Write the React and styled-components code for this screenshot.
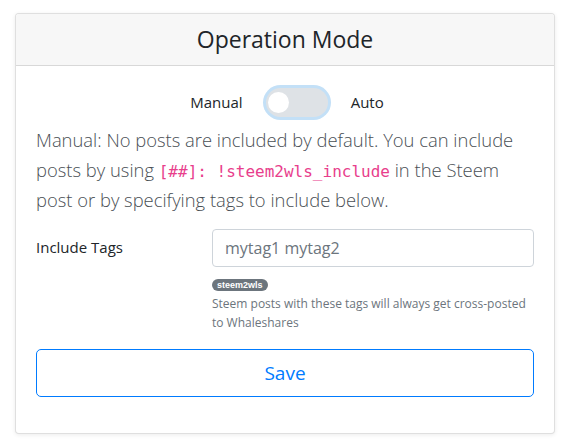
import React from "react";
import styled, { createGlobalStyle } from "styled-components";

const Global = createGlobalStyle`
  html, body { margin: 0; padding: 0; background: #fff; }
  body {
    font-family: "Open Sans", "Noto Sans", "Liberation Sans", sans-serif;
    color: #212529;
    font-size: 16px;
    line-height: 1.5;
  }
  * { box-sizing: border-box; }
`;

const Page = styled.div`
  padding: 13px 18px 7px 15px;
`;

const Card = styled.div`
  border: 1px solid rgba(0, 0, 0, 0.125);
  border-radius: 4px;
  background: #fff;
  box-shadow: 0 1px 4px rgba(0, 0, 0, 0.08);
  overflow: hidden;
`;

const CardHeader = styled.div`
  background: #f7f7f7;
  border-bottom: 1px solid rgba(0, 0, 0, 0.125);
  padding: 12px 20px;
  text-align: center;
`;

const Title = styled.h4`
  margin: 0;
  font-size: 23px;
  font-weight: 400;
  line-height: 27px;
  color: #212529;
`;

const CardBody = styled.div`
  padding: 20px;
`;

const SwitchRow = styled.div`
  display: flex;
  justify-content: center;
  align-items: center;
  gap: 23px;
  height: 32px;
  margin-bottom: 7px;
  font-size: 15px;
  padding-left: 4px;
`;

const Track = styled.span`
  position: relative;
  display: inline-block;
  width: 62px;
  height: 29px;
  border-radius: 15px;
  background: #dee2e6;
  box-shadow: 0 0 0 3px #c3e0f7;
`;

const Knob = styled.span`
  position: absolute;
  top: 4px;
  left: 2px;
  width: 21px;
  height: 21px;
  border-radius: 50%;
  background: #fff;
`;

const Lead = styled.p`
  margin: 0 0 14px;
  font-size: 18.4px;
  font-weight: 300;
  line-height: 30px;
  color: #4a4f55;
`;

const Code = styled.code`
  font-family: "DejaVu Sans Mono", "Liberation Mono", monospace;
  font-size: 16px;
  line-height: 1;
  color: #e83e8c;
`;

const FormRow = styled.div`
  display: grid;
  grid-template-columns: 176px 1fr;
  margin-bottom: 17px;
`;

const Label = styled.label`
  padding-top: 6px;
  font-size: 15px;
  line-height: 24px;
`;

const Field = styled.div`
  display: flex;
  flex-direction: column;
  align-items: flex-start;
`;

const Input = styled.input`
  width: 100%;
  height: 38px;
  padding: 6px 12px;
  border: 1px solid #ced4da;
  border-radius: 4px;
  font-family: inherit;
  font-size: 16px;
  color: #495057;
  outline: none;
  &::placeholder { color: #6c757d; }
`;

const Badge = styled.span`
  margin-top: 12px;
  display: inline-block;
  height: 12px;
  padding: 0 5px;
  border-radius: 6px;
  background: #6c757d;
  color: #fff;
  font-family: "Liberation Sans", sans-serif;
  font-size: 9px;
  font-weight: 700;
  line-height: 12px;
`;

const Help = styled.small`
  display: block;
  margin-top: 4px;
  font-size: 12px;
  line-height: 18.5px;
  color: #6c757d;
`;

const SaveButton = styled.button`
  display: block;
  width: 100%;
  height: 48px;
  margin-bottom: 16px;
  border: 1px solid #007bff;
  border-radius: 5px;
  background: #fff;
  color: #007bff;
  font-family: inherit;
  font-size: 19px;
  line-height: 30px;
  cursor: pointer;
`;

export default function App() {
  return (
    <Page>
      <Global />
      <Card>
        <CardHeader>
          <Title>Operation Mode</Title>
        </CardHeader>
        <CardBody>
          <SwitchRow>
            <span>Manual</span>
            <Track>
              <Knob />
            </Track>
            <span>Auto</span>
          </SwitchRow>
          <Lead>
            Manual: No posts are included by default. You can include posts by using{" "}
            <Code>[##]: !steem2wls_include</Code> in the Steem post or by specifying tags to
            include below.
          </Lead>
          <FormRow>
            <Label>Include Tags</Label>
            <Field>
              <Input placeholder="mytag1 mytag2" />
              <Badge>steem2wls</Badge>
              <Help>Steem posts with these tags will always get cross-posted to Whaleshares</Help>
            </Field>
          </FormRow>
          <SaveButton>Save</SaveButton>
        </CardBody>
      </Card>
    </Page>
  );
}
